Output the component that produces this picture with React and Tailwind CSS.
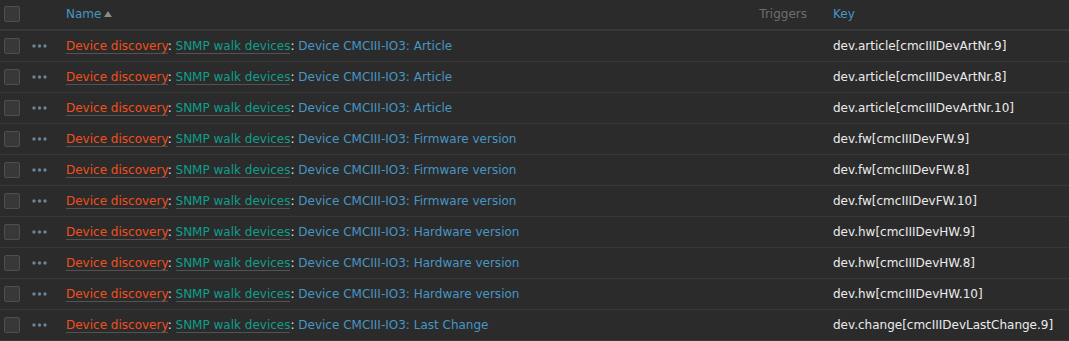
const items = [
  { name: "Article", key: "dev.article[cmcIIIDevArtNr.9]" },
  { name: "Article", key: "dev.article[cmcIIIDevArtNr.8]" },
  { name: "Article", key: "dev.article[cmcIIIDevArtNr.10]" },
  { name: "Firmware version", key: "dev.fw[cmcIIIDevFW.9]" },
  { name: "Firmware version", key: "dev.fw[cmcIIIDevFW.8]" },
  { name: "Firmware version", key: "dev.fw[cmcIIIDevFW.10]" },
  { name: "Hardware version", key: "dev.hw[cmcIIIDevHW.9]" },
  { name: "Hardware version", key: "dev.hw[cmcIIIDevHW.8]" },
  { name: "Hardware version", key: "dev.hw[cmcIIIDevHW.10]" },
  { name: "Last Change", key: "dev.change[cmcIIIDevLastChange.9]" },
];

const cols = "grid grid-cols-[24px_36px_688px_80px_1fr]";

const Checkbox = () => (
  <span className="block h-4 w-4 rounded-[2px] border border-[#4f4f4f] bg-[#383838]" />
);

const Dots = () => (
  <svg width="15" height="4" viewBox="0 0 15 4" className="block">
    <circle cx="2" cy="2" r="1.7" fill="#6a8497" />
    <circle cx="7.5" cy="2" r="1.7" fill="#6a8497" />
    <circle cx="13" cy="2" r="1.7" fill="#6a8497" />
  </svg>
);

const App = () => {
  return (
    <div className="min-h-screen bg-[#2b2b2b] text-[12px] text-[#ebebeb] [font-family:'DejaVu_Sans',sans-serif]">
      <div className={`${cols} h-[31px] items-center border-b-2 border-[#383838] pb-[2px]`}>
        <div className="pl-1">
          <Checkbox />
        </div>
        <div />
        <div className="flex items-center pl-[6px] text-[#4796c4]">
          Name
          <svg width="8" height="6" viewBox="0 0 8 6" className="ml-[3px] mt-[1px]">
            <path d="M0 6 L4 0 L8 6 Z" fill="#8a8a8a" />
          </svg>
        </div>
        <div className="pr-[21px] text-right text-[#6e6e6e]">Triggers</div>
        <div className="pl-[5px] text-[#4796c4]">Key</div>
      </div>

      {items.map((item, index) => (
        <div
          key={index}
          className={`${cols} h-[31px] items-center border-b border-[#383838]`}
        >
          <div className="pl-1">
            <Checkbox />
          </div>
          <div className="pl-2">
            <Dots />
          </div>
          <div className="whitespace-nowrap pl-[6px]">
            <span className="border-b border-[#525252] text-[#f24f1d]">
              Device discovery
            </span>
            <span className="text-[#ebebeb]">: </span>
            <span className="border-b border-[#525252] text-[#0e9f8b]">
              SNMP walk devices
            </span>
            <span className="text-[#ebebeb]">: </span>
            <span className="text-[#4796c4]">Device CMCIII-IO3: {item.name}</span>
          </div>
          <div />
          <div className="whitespace-nowrap pl-[5px]">{item.key}</div>
        </div>
      ))}
    </div>
  );
};

export default App;
